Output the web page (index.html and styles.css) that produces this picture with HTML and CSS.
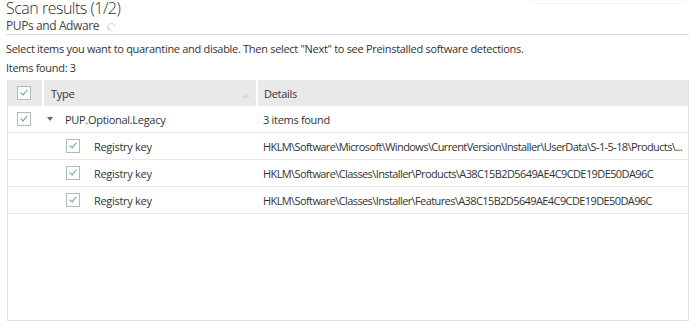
FILE: index.html
```html
<!DOCTYPE html>
<html lang="en">
<head>
  <meta charset="UTF-8" />
  <title>Scan results</title>
  <link rel="stylesheet" href="styles.css">
</head>
<body>

  <div class="page">
    <div class="title-row">
      <h1 class="title">Scan results (1/2)</h1>
      <div class="search-stub"></div>
    </div>
    <div class="subtitle">
      PUPs and Adware
      <svg class="refresh" width="9" height="9" viewBox="0 0 10 10">
        <path d="M2 8.5 A4 4 0 1 1 8.8 5.5" fill="none" stroke="#c8c8c8" stroke-width="1"/>
        <path d="M2 5.5 L2 8.8 L5 8.8" fill="none" stroke="#c8c8c8" stroke-width="1"/>
      </svg>
    </div>
    <div class="rule"></div>

    <p class="hint">Select items you want to quarantine and disable. Then select "Next" to see Preinstalled software detections.</p>
    <p class="count">Items found: 3</p>

    <div class="results">
      <div class="row head">
        <div class="cell check"><span class="box"></span></div>
        <div class="cell type">Type <span class="sort"></span></div>
        <div class="cell details">Details</div>
      </div>

      <div class="row">
        <div class="cell check"><span class="box"></span></div>
        <div class="cell type"><span class="caret"></span>PUP.Optional.Legacy</div>
        <div class="cell details">3 items found</div>
      </div>

      <div class="row child">
        <div class="cell check"></div>
        <div class="cell type"><span class="box"></span>Registry key</div>
        <div class="cell details path">HKLM\Software\Microsoft\Windows\CurrentVersion\Installer\UserData\S-1-5-18\Products\...</div>
      </div>

      <div class="row child">
        <div class="cell check"></div>
        <div class="cell type"><span class="box"></span>Registry key</div>
        <div class="cell details path">HKLM\Software\Classes\Installer\Products\A38C15B2D5649AE4C9CDE19DE50DA96C</div>
      </div>

      <div class="row child">
        <div class="cell check"></div>
        <div class="cell type"><span class="box"></span>Registry key</div>
        <div class="cell details path">HKLM\Software\Classes\Installer\Features\A38C15B2D5649AE4C9CDE19DE50DA96C</div>
      </div>
    </div>
  </div>

</body>
</html>
```

FILE: styles.css
```css
body {
  margin: 0;
  background: #ffffff;
  font-family: 'Open Sans', 'Noto Sans', sans-serif;
  color: #333;
  letter-spacing: -0.3px;
}

.page {
  padding: 0 11px 0 6px;
}

.title-row {
  display: flex;
  justify-content: space-between;
  align-items: flex-start;
}

.title {
  margin: 0;
  font-size: 16px;
  font-weight: 300;
  line-height: 16px;
  letter-spacing: -0.5px;
  color: #2e2e2e;
}

.search-stub {
  width: 154px;
  height: 3px;
  margin-right: 4px;
  border: 1px solid #f4f4f4;
  border-top: none;
  border-radius: 0 0 3px 3px;
}

.subtitle {
  display: flex;
  align-items: center;
  gap: 8px;
  margin-top: 2px;
  font-size: 12px;
  line-height: 15px;
  letter-spacing: -0.4px;
  color: #444;
}

.refresh {
  margin-top: 1px;
}

.rule {
  height: 1px;
  background: #dcdcdc;
  margin-top: 1px;
}

.hint {
  margin: 6px 0 0;
  font-size: 11px;
  line-height: 16px;
}

.count {
  margin: 3px 0 0;
  font-size: 11px;
  line-height: 16px;
}

.results {
  margin: 4px 0 0 1px;
  height: 240px;
  border: 1px solid #dedede;
  border-top: none;
}

.row {
  display: flex;
  height: 26px;
  border-bottom: 1px solid #e8e8e8;
  font-size: 11px;
}

.row.head {
  border-bottom: none;
  gap: 2px;
}

.cell {
  display: flex;
  align-items: center;
  white-space: nowrap;
  overflow: hidden;
}

.check {
  width: 34px;
  padding-left: 9px;
  box-sizing: border-box;
}

.type {
  width: 212px;
  padding-left: 7px;
  box-sizing: border-box;
}

.details {
  flex: 1;
  padding-left: 6px;
}

.row:not(.head) .type {
  width: 214px;
}

.row:not(.head) .details {
  padding-left: 7px;
}

.path {
  letter-spacing: -0.6px;
}

.head .cell {
  background: #e9e9e9;
}

.head .type {
  position: relative;
}

.sort {
  position: absolute;
  right: 6px;
  top: 13px;
  width: 0;
  height: 0;
  border-left: 4px solid transparent;
  border-right: 4px solid transparent;
  border-bottom: 5px solid #dadada;
}

.box {
  display: inline-block;
  position: relative;
  width: 12px;
  height: 12px;
  border: 1px solid #b8b8b8;
  background: #fff;
  flex-shrink: 0;
}

.box::after {
  content: "";
  position: absolute;
  left: 4px;
  top: 1px;
  width: 3px;
  height: 6px;
  border: solid #4fb462;
  border-width: 0 1px 1px 0;
  transform: rotate(40deg);
}

.caret {
  display: inline-block;
  width: 0;
  height: 0;
  margin: 0 12px 0 -2px;
  border-left: 3.5px solid transparent;
  border-right: 3.5px solid transparent;
  border-top: 4px solid #666;
}

.child .type {
  padding-left: 24px;
}

.child .box {
  margin-right: 14px;
}
```
